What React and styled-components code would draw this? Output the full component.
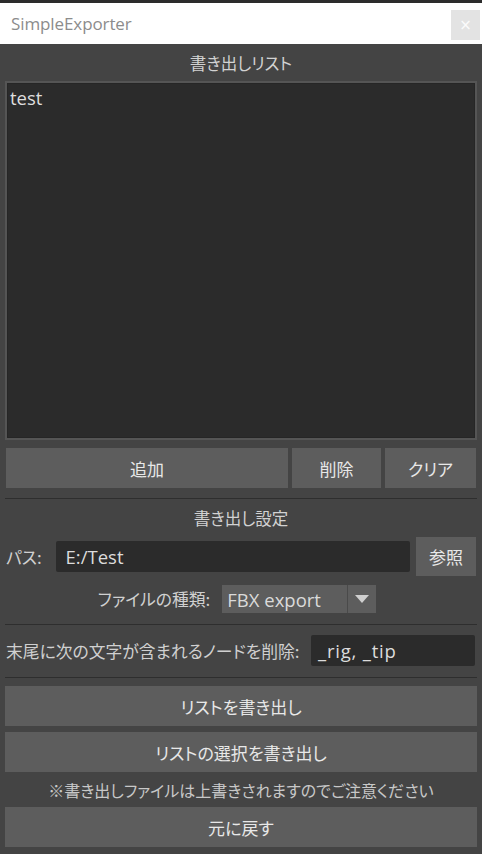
import React from "react";
import styled, { createGlobalStyle } from "styled-components";

const Global = createGlobalStyle`
  html, body { margin: 0; padding: 0; background: #444444; }
  body {
    font-family: "Noto Sans CJK JP", "Open Sans", sans-serif;
    font-feature-settings: "palt";
    -webkit-font-smoothing: antialiased;
  }
  * { box-sizing: border-box; }
`;

const Window = styled.div`
  width: 482px;
  height: 854px;
  display: flex;
  flex-direction: column;
  background: #444444;
  overflow: hidden;
`;

const TopStrip = styled.div`
  height: 3px;
  flex: none;
  background: #2c2c2c;
`;

const TitleBar = styled.div`
  height: 41px;
  flex: none;
  background: #ffffff;
  display: flex;
  align-items: center;
  justify-content: space-between;
  padding: 0 2px 0 11px;
`;

const Title = styled.span`
  font-family: "Open Sans", "Noto Sans", sans-serif;
  font-size: 17px;
  color: #8c8c8c;
  letter-spacing: -0.1px;
`;

const CloseBtn = styled.div`
  width: 29px;
  height: 30px;
  margin-top: 2px;
  background: #e3e3e3;
  color: #fbfbfb;
  display: flex;
  align-items: center;
  justify-content: center;
  font-family: "DejaVu Sans", sans-serif;
  font-size: 15px;
`;

const Panel = styled.div`
  flex: 1;
  display: flex;
  flex-direction: column;
  padding: 0 5px;
`;

const SectionLabel = styled.div`
  height: ${(p) => p.$h}px;
  flex: none;
  display: flex;
  align-items: center;
  justify-content: center;
  color: #d2d2d2;
  font-size: 16.5px;
`;

const ListBox = styled.div`
  height: 359px;
  flex: none;
  background: #2b2b2b;
  border: 2px solid #555555;
  box-shadow: inset 0 0 0 1px #262626;
  padding: 2px 3px;
  color: #dedede;
  font-family: "Open Sans", "Noto Sans CJK JP", sans-serif;
  font-size: 18.5px;
  line-height: 26px;
`;

const ButtonRow = styled.div`
  display: flex;
  flex: none;
  gap: 4px;
  margin: 8px 1px 0;
  height: 40px;
`;

const Button = styled.div`
  flex: ${(p) => p.$flex || "none"};
  height: ${(p) => p.$h || 40}px;
  background: #5d5d5d;
  color: #e8e8e8;
  font-size: 17px;
  display: flex;
  align-items: center;
  justify-content: center;
`;

const Separator = styled.div`
  height: 1px;
  flex: none;
  background: #2e2e2e;
  margin-top: ${(p) => p.$mt}px;
`;

const Row = styled.div`
  display: flex;
  flex: none;
  align-items: center;
  justify-content: ${(p) => p.$justify || "flex-start"};
  height: ${(p) => p.$h}px;
  gap: ${(p) => p.$gap || 0}px;
  margin-top: ${(p) => p.$mt || 0}px;
  padding-left: ${(p) => p.$pl || 0}px;
  padding-right: ${(p) => p.$pr || 0}px;
`;

const Label = styled.span`
  color: #d0d0d0;
  font-size: 16.8px;
  white-space: nowrap;
`;

const Input = styled.div`
  height: 31px;
  width: ${(p) => (p.$w ? p.$w + "px" : "auto")};
  flex: ${(p) => (p.$w ? "none" : "1")};
  margin-left: ${(p) => p.$ml || 0}px;
  background: #2b2b2b;
  color: #dcdcdc;
  font-family: "Open Sans", "Noto Sans CJK JP", sans-serif;
  font-size: 18.5px;
  letter-spacing: ${(p) => p.$ls || 0}px;
  display: flex;
  align-items: center;
  padding-left: ${(p) => p.$pl || 10}px;
  border-radius: 2px;
`;

const Combo = styled.div`
  width: 154px;
  height: 28px;
  background: #5d5d5d;
  display: flex;
  align-items: stretch;
`;

const ComboText = styled.div`
  flex: 1;
  color: #dadada;
  font-family: "Open Sans", "Noto Sans CJK JP", sans-serif;
  font-size: 18.5px;
  display: flex;
  align-items: center;
  padding-left: 5px;
`;

const ComboArrow = styled.div`
  width: 29px;
  border-left: 1px solid #4a4a4a;
  display: flex;
  align-items: center;
  justify-content: center;
`;

const Note = styled.div`
  height: 35px;
  flex: none;
  display: flex;
  align-items: center;
  justify-content: center;
  color: #c8c8c8;
  font-size: 16px;
`;

const Stack = styled.div`
  display: flex;
  flex: none;
  flex-direction: column;
  gap: ${(p) => p.$gap || 0}px;
  margin-top: ${(p) => p.$mt || 0}px;
`;

export default function App() {
  return (
    <Window>
      <Global />
      <TopStrip />
      <TitleBar>
        <Title>SimpleExporter</Title>
        <CloseBtn>×</CloseBtn>
      </TitleBar>
      <Panel>
        <SectionLabel $h={37}>書き出しリスト</SectionLabel>
        <ListBox>test</ListBox>
        <ButtonRow>
          <Button $flex="0 0 282px">追加</Button>
          <Button $flex="0 0 89px">削除</Button>
          <Button $flex="1">クリア</Button>
        </ButtonRow>
        <Separator $mt={10} />
        <SectionLabel $h={38}>書き出し設定</SectionLabel>
        <Row $h={39} $gap={6} $pl={1} $pr={1}>
          <Label>パス:</Label>
          <Input $ml={8}>E:/Test</Input>
          <Button $flex="0 0 60px" $h={39}>参照</Button>
        </Row>
        <Row $h={28} $gap={12} $mt={9} $justify="center" $pr={8}>
          <Label>ファイルの種類:</Label>
          <Combo>
            <ComboText>FBX export</ComboText>
            <ComboArrow>
              <svg width="14" height="8" viewBox="0 0 14 8">
                <polygon points="0,0 14,0 7,8" fill="#cfcfcf" />
              </svg>
            </ComboArrow>
          </Combo>
        </Row>
        <Separator $mt={11} />
        <Row $h={31} $mt={10} $justify="space-between" $pl={1} $pr={2}>
          <Label>末尾に次の文字が含まれるノードを削除:</Label>
          <Input $w={164} $pl={7} $ls={0.8}>_rig, _tip</Input>
        </Row>
        <Separator $mt={11} />
        <Stack $gap={6} $mt={8}>
          <Button>リストを書き出し</Button>
          <Button>リストの選択を書き出し</Button>
        </Stack>
        <Note>※書き出しファイルは上書きされますのでご注意ください</Note>
        <Button>元に戻す</Button>
      </Panel>
    </Window>
  );
}
